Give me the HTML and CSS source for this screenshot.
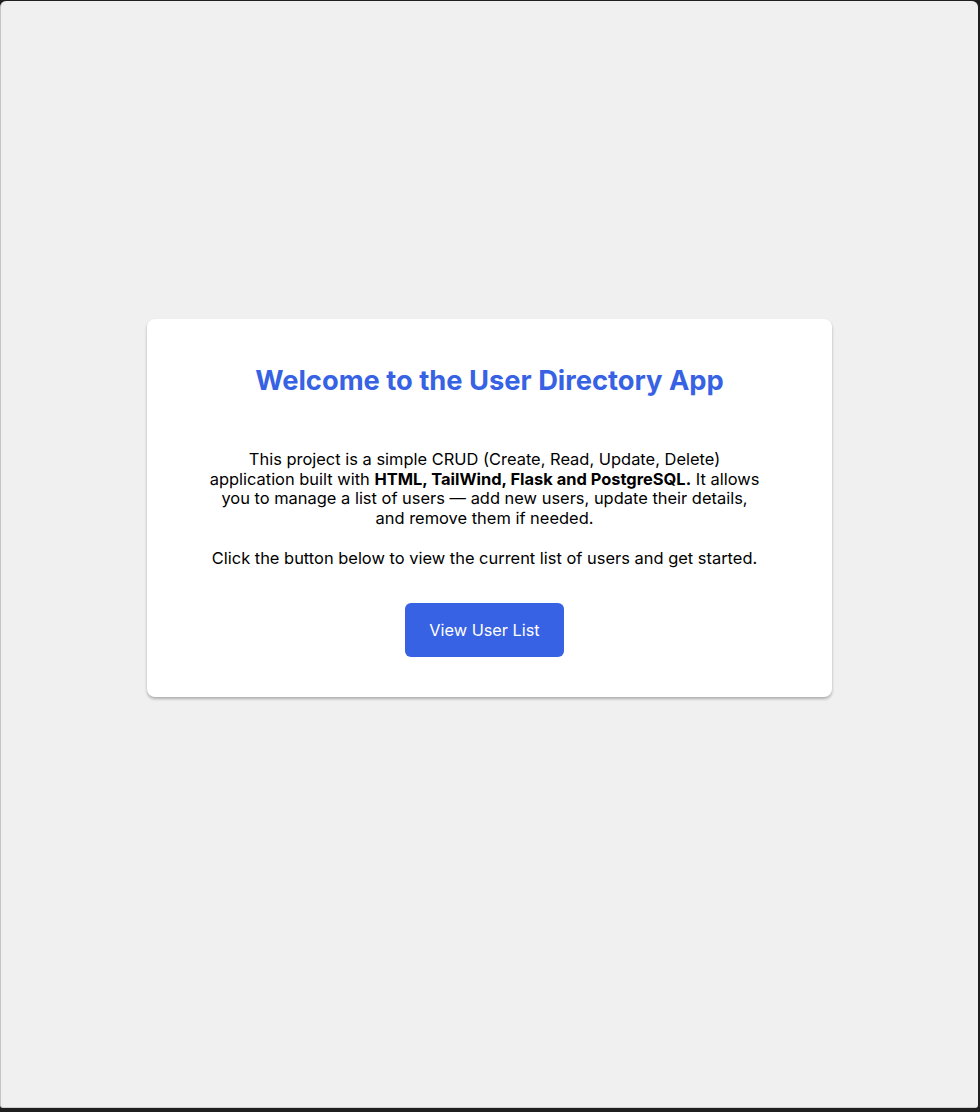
FILE: index.html
```html
<!DOCTYPE html>
<html lang="en">
<head>
<meta charset="utf-8">
<title>User Directory App</title>
<link rel="stylesheet" href="styles.css">
</head>
<body>
<div class="window">
  <main class="card">
    <h1 class="title">Welcome to the User Directory App</h1>
    <div class="body">
      <div class="content">
        <p>This project is a simple CRUD (Create, Read, Update, Delete) application built with <strong>HTML, TailWind, Flask and PostgreSQL.</strong> It allows you to manage a list of users — add new users, update their details, and remove them if needed.</p>
        <p>Click the button below to view the current list of users and get started.</p>
      </div>
      <a class="btn" href="#">View User List</a>
    </div>
  </main>
</div>
</body>
</html>
```
FILE: styles.css
```css
html, body {
  margin: 0;
  padding: 0;
  height: 100%;
}
body {
  background: #1f1f1f;
  font-family: Inter, "Noto Sans", sans-serif;
}
.window {
  box-sizing: border-box;
  margin: 1px 2px 4px 0;
  height: 1107px;
  background: #f0f0f0;
  border-radius: 6px 6px 3px 3px;
  border-left: 1px solid #c4c4c4;
  border-bottom: 1px solid #d0d0d0;
  padding-top: 318px;
  display: flex;
  flex-direction: column;
  align-items: center;
}
.card {
  box-sizing: border-box;
  width: 685px;
  background: #fff;
  border-radius: 8px;
  box-shadow: 0 2px 3px rgba(0,0,0,0.28);
  padding: 44px 40px 40px;
  display: flex;
  flex-direction: column;
  align-items: center;
  text-align: center;
}
.title {
  margin: 0 0 51px;
  font-size: 27.3px;
  line-height: 36px;
  font-weight: 700;
  color: #3762e4;
}
.body {
  align-self: stretch;
  padding-right: 10px;
  display: flex;
  flex-direction: column;
  align-items: center;
}
.content {
  width: 552px;
  color: #000;
  font-size: 16.45px;
  line-height: 19.7px;
}
.content p {
  margin: 0 0 20px;
}
.content p:last-child {
  margin-bottom: 0;
}
.content strong {
  font-weight: 700;
}
.btn {
  margin-top: 34px;
  display: inline-block;
  padding: 15px 24px;
  font-size: 16.3px;
  line-height: 24px;
  color: #fff;
  background: #3762e4;
  border-radius: 6px;
  text-decoration: none;
}
```
